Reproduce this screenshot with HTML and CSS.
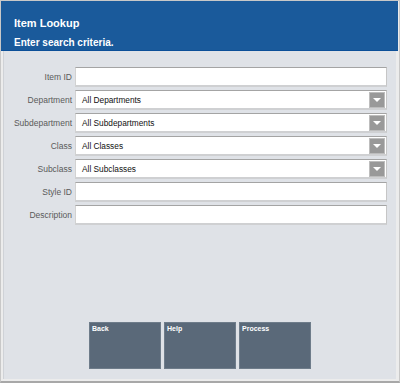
FILE: index.html
```html
<!DOCTYPE html>
<html>
<head>
<meta charset="utf-8">
<link rel="stylesheet" href="styles.css">
</head>
<body>
<div class="app">
  <header class="header">
    <div class="title">Item Lookup</div>
    <div class="subtitle">Enter search criteria.</div>
  </header>
  <main class="panel">
    <div class="form">
      <div class="row"><label class="label">Item ID</label><div class="field"></div></div>
      <div class="row"><label class="label">Department</label><div class="field select"><span class="value">All Departments</span><span class="arrow"></span></div></div>
      <div class="row"><label class="label">Subdepartment</label><div class="field select"><span class="value">All Subdepartments</span><span class="arrow"></span></div></div>
      <div class="row"><label class="label">Class</label><div class="field select"><span class="value">All Classes</span><span class="arrow"></span></div></div>
      <div class="row"><label class="label">Subclass</label><div class="field select"><span class="value">All Subclasses</span><span class="arrow"></span></div></div>
      <div class="row"><label class="label">Style ID</label><div class="field"></div></div>
      <div class="row"><label class="label">Description</label><div class="field"></div></div>
    </div>
    <div class="buttons">
      <div class="btn">Back</div>
      <div class="btn">Help</div>
      <div class="btn">Process</div>
    </div>
  </main>
</div>
</body>
</html>
```

FILE: styles.css
```css
html, body {
  margin: 0;
  padding: 0;
  background: #ececec;
}
.app {
  width: 400px;
  height: 383px;
  box-sizing: border-box;
  border-top: 1px solid #c8c8c8;
  border-left: 1px solid #c8c8c8;
  border-right: 1px solid #c8c8c8;
  border-bottom: 2px solid #a8a8a8;
  background: #ececec;
  padding: 0 1px 2px 0;
  display: flex;
  flex-direction: column;
  font-family: "Liberation Sans", Arial, sans-serif;
}
.header {
  height: 50px;
  background: #1a5a9b;
  border-bottom: 1px solid #0b4f98;
  color: #fff;
  font-weight: bold;
  padding: 16px 0 0 13px;
  box-sizing: border-box;
  display: flex;
  flex-direction: column;
  gap: 7px;
}
.title {
  font-size: 11px;
  line-height: 13px;
}
.subtitle {
  font-size: 10px;
  line-height: 12px;
}
.panel {
  flex: 1;
  background: #dfe2e7;
  margin-left: 2px;
  margin-right: 2px;
  border-left: 1px solid #cfd2d7;
  display: flex;
  flex-direction: column;
}
.form {
  padding: 16px 9px 0 0;
  display: flex;
  flex-direction: column;
  gap: 3px;
}
.row {
  display: flex;
  align-items: center;
  height: 20px;
}
.label {
  width: 71px;
  box-sizing: border-box;
  text-align: right;
  padding-right: 3px;
  font-size: 8.5px;
  color: #5a5a5a;
  flex: none;
}
.field {
  flex: 1;
  height: 20px;
  box-sizing: border-box;
  background: #fff;
  border-top: 1px solid #a4a4a4;
  border-left: 1px solid #d2d2d2;
  border-right: 1px solid #c6c6c6;
  border-bottom: 2px solid #cfd0d2;
  display: flex;
  align-items: center;
  position: relative;
}
.value {
  font-size: 8.3px;
  color: #111;
  padding-left: 6px;
  flex: 1;
}
.arrow {
  width: 16px;
  height: 16px;
  box-sizing: border-box;
  background: #999999;
  border: 1px solid #bdbdbd;
  margin-right: 1px;
  display: flex;
  align-items: center;
  justify-content: center;
}
.arrow::after {
  content: "";
  width: 0;
  height: 0;
  border-left: 4px solid transparent;
  border-right: 4px solid transparent;
  border-top: 4px solid #fff;
  margin-top: 1px;
}
.buttons {
  margin-top: auto;
  margin-bottom: 10px;
  display: flex;
  justify-content: center;
  gap: 3px;
}
.btn {
  width: 72px;
  height: 47px;
  box-sizing: border-box;
  background: #5a6979;
  border: 1px solid #6e7c8a;
  color: #fff;
  font-size: 7px;
  font-weight: bold;
  padding: 2px 2px;
}
```
